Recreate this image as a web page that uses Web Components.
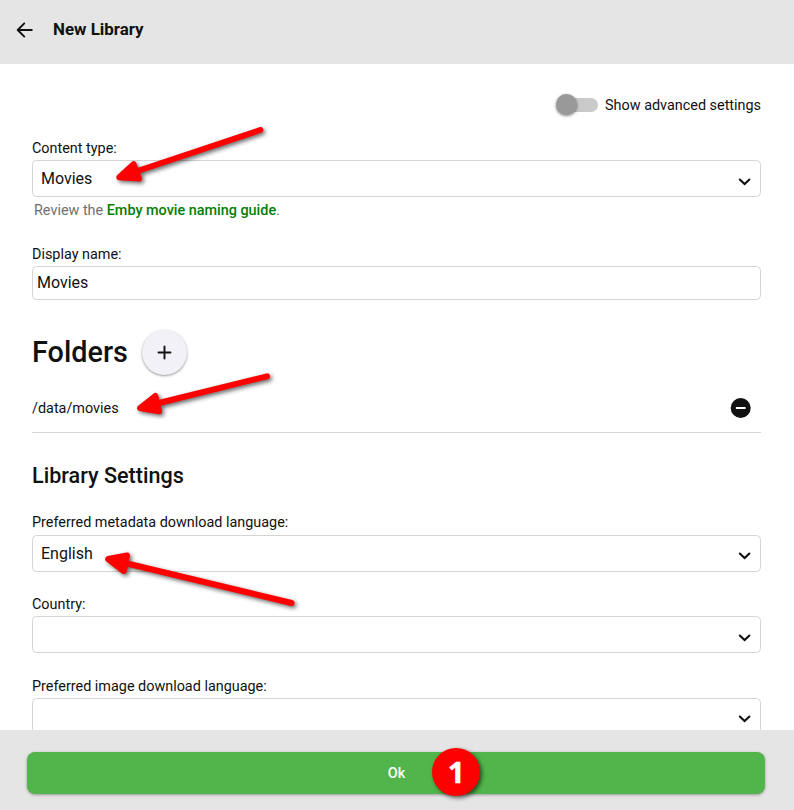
<!DOCTYPE html>
<html lang="en">
<head>
<meta charset="utf-8">
<title>New Library</title>
<style>
html,body{margin:0;height:100%;overflow:hidden;background:#fff}
body{font-family:Roboto,"Liberation Sans",sans-serif;color:#111}
</style>
</head>
<body>
<library-page></library-page>
<script>
const define = (name, html, init) => customElements.define(name, class extends HTMLElement {
  constructor() {
    super();
    this.attachShadow({ mode: 'open' }).innerHTML = html;
  }
  connectedCallback() { if (init) init(this, this.shadowRoot); }
});

define('page-header', `<style>
:host{display:flex;align-items:center;height:64px;padding:0 0 6px 15px;box-sizing:border-box;background:#e5e5e5;flex:none}
svg{display:block;margin-right:18px}
h1{font-size:16.9px;font-weight:700;line-height:20px;margin:0}
</style>
<svg width="20" height="20" viewBox="0 0 20 20" fill="none" stroke="#111" stroke-width="1.9" stroke-linecap="round" stroke-linejoin="round"><path d="M16.8 11H3M9.3 4.4L2.7 11L9.3 17.6"/></svg>
<h1><slot></slot></h1>`);

define('toggle-switch', `<style>
:host{display:flex;align-items:center;justify-content:flex-end;height:20px;font-size:14.4px;line-height:20px}
.track{width:37px;height:14px;border-radius:7px;background:#cacaca;margin-right:7px;display:flex;align-items:center}
.thumb{width:21px;height:21px;border-radius:50%;background:#999;margin:0 0 1px -5px;flex:none;box-shadow:0 1px 3px rgba(0,0,0,.5)}
.text{padding-top:2px}
</style><span class="track"><span class="thumb"></span></span><span class="text"><slot></slot></span>`);

define('select-field', `<style>
:host{display:block}
label{display:block;box-sizing:border-box;padding-top:.8px;font-size:14.4px;line-height:18px;height:21px}
.box{height:37px;box-sizing:border-box;border:1px solid #d5d5d5;border-radius:4.5px;display:flex;align-items:center;justify-content:space-between;padding:1px 9.5px 0 8px;font-size:16px;line-height:20px}
svg{display:block;margin:5px 0 0 auto}
</style><label></label><div class="box"><slot></slot><svg width="13" height="10" viewBox="0 0 13 10" fill="none" stroke="#111" stroke-width="2.1" stroke-linecap="round"><path d="M1.8 2.5L6.6 7.1L11.4 2.5"/></svg></div>`,
(el, root) => { root.querySelector('label').textContent = el.getAttribute('label'); });

define('text-field', `<style>
:host{display:block}
label{display:block;box-sizing:border-box;padding-top:.8px;font-size:14.4px;line-height:18px;height:21px}
.box{height:34px;box-sizing:border-box;border:1px solid #d5d5d5;border-radius:4.5px;padding:6px 4px;font-size:16px;line-height:20px}
</style><label></label><div class="box"><slot></slot></div>`,
(el, root) => { root.querySelector('label').textContent = el.getAttribute('label'); });

define('field-help', `<style>
:host{display:block;font-size:14.4px;line-height:20px;height:20px;padding-left:2px;color:#707070}
::slotted(a){color:#008000;font-weight:500;text-decoration:none}
</style><slot></slot>`);

define('folder-heading', `<style>
:host{display:flex;align-items:center;height:46px}
h2{font-size:28.8px;font-weight:500;line-height:34px;margin:0 14px 2px 0}
.add{width:45px;height:45px;margin:0 0 1px 0;border-radius:50%;background:#f2f1f7;display:flex;align-items:center;justify-content:center;box-shadow:0 1px 2.5px rgba(0,0,0,.42)}
svg{display:block}
</style><h2><slot></slot></h2><span class="add"><svg width="15" height="15" viewBox="0 0 15 15" stroke="#111" stroke-width="1.9" stroke-linecap="round"><path d="M7.5 1.5V13.5M1.5 7.5H13.5"/></svg></span>`);

define('folder-row', `<style>
:host{display:flex;align-items:center;justify-content:space-between;height:49px;box-sizing:border-box;border-bottom:1px solid #d5d5d5;padding-right:10px;font-size:14.4px}
svg{display:block}
</style><span><slot></slot></span><svg width="21" height="20" viewBox="0 0 21 20"><circle cx="10.7" cy="10" r="10" fill="#111"/><path d="M5.9 10H15.6" stroke="#fff" stroke-width="2"/></svg>`);

define('page-footer', `<style>
:host{display:block;height:80px;box-sizing:border-box;background:#e5e5e5;padding:22px 29px 0 27px;flex:none}
.ok{display:flex;height:42px;box-sizing:border-box;padding-left:1px;align-items:center;justify-content:center;background:#52b54b;border-radius:8px;color:#fff;font-size:14.4px;font-weight:500;box-shadow:0 1px 3px rgba(0,0,0,.35)}
</style><div class="ok"><slot></slot></div>`);

/* Red pointer: shaft line from tail to neck plus a rounded triangular head. */
define('arrow-mark', `<style>
:host{position:absolute;inset:0;pointer-events:none}
svg{display:block;filter:drop-shadow(2px 2px 2px rgba(0,0,0,.6))}
</style><svg width="794" height="810" fill="#f00" stroke="#f00" stroke-width="6" stroke-linejoin="round" stroke-linecap="round"><path class="head"/><path class="shaft"/></svg>`,
(el, root) => {
  root.querySelector('.head').setAttribute('d', el.getAttribute('head'));
  root.querySelector('.shaft').setAttribute('d', el.getAttribute('shaft'));
});

define('step-badge', `<style>
:host{position:absolute;left:432.4px;top:748.4px;width:48px;height:48px;border-radius:50%;background:#f00;color:#fff;display:flex;align-items:center;justify-content:center;font:700 29px/46px "Open Sans",sans-serif;box-shadow:2px 2px 4px rgba(0,0,0,.6);box-sizing:border-box;padding-bottom:1px;-webkit-text-stroke:.6px #fff}
</style><slot></slot>`);

define('library-page', `<style>
:host{display:flex;flex-direction:column;width:794px;height:810px;position:relative;overflow:hidden}
main{flex:1;min-height:0;overflow:hidden;padding:31px 33px 0 32px}
toggle-switch{margin-bottom:24px}
field-help{margin:4px 0 24px}
folder-heading{margin:30px 0 8px}
h3{font-size:21.6px;font-weight:500;line-height:26px;margin:30px 0 24.6px}
.stack{display:grid;gap:23.6px}
</style>
<page-header>New Library</page-header>
<main>
<toggle-switch>Show advanced settings</toggle-switch>
<select-field label="Content type:">Movies</select-field>
<field-help>Review the <a>Emby movie naming guide</a>.</field-help>
<text-field label="Display name:">Movies</text-field>
<folder-heading>Folders</folder-heading>
<folder-row>/data/movies</folder-row>
<h3>Library Settings</h3>
<div class="stack">
<select-field label="Preferred metadata download language:">English</select-field>
<select-field label="Country:"></select-field>
<select-field label="Preferred image download language:"></select-field>
</div>
</main>
<page-footer>Ok</page-footer>
<arrow-mark head="M119.3 177.3L133.6 164.2L139 178.6Z" shaft="M136 171.5L260.3 130"></arrow-mark>
<arrow-mark head="M140 408L155.3 396L159 411.3Z" shaft="M157 403.5L267 376.3"></arrow-mark>
<arrow-mark head="M108.2 559L127 555.5L123.8 571Z" shaft="M125 563L291.5 603"></arrow-mark>
<step-badge>1</step-badge>`);
</script>
</body>
</html>
